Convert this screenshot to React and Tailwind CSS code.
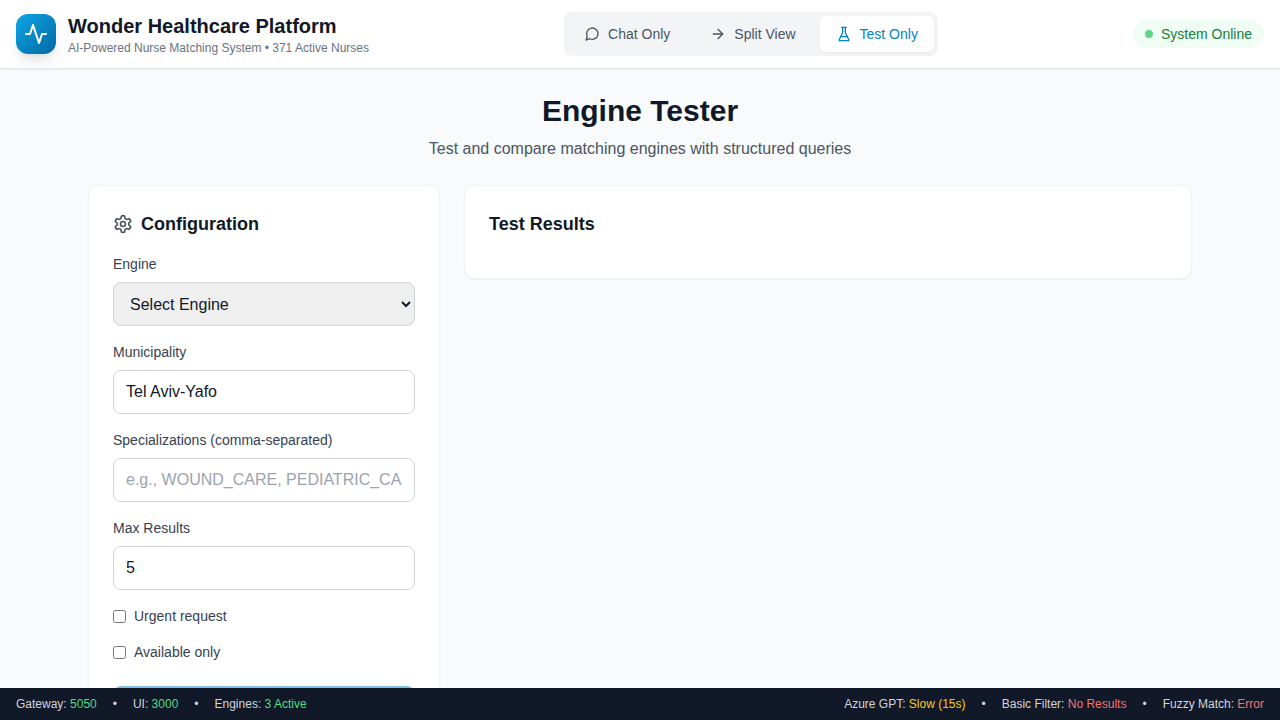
import React from "react";
import { ArrowRight } from "lucide-react";

function LineIcon({ className, children }) {
  return (
    <svg className={className} viewBox="0 0 24 24" fill="none" stroke="currentColor" strokeWidth="2" strokeLinecap="round" strokeLinejoin="round" aria-hidden="true">
      {children}
    </svg>
  );
}

function PulseIcon({ className }) {
  return (
    <LineIcon className={className}>
      <path d="M22 12h-4l-3 9L9 3l-3 9H2" />
    </LineIcon>
  );
}

function MessageIcon({ className }) {
  return (
    <LineIcon className={className}>
      <path d="m3 21 1.9-5.7a8.5 8.5 0 1 1 3.8 3.8z" />
    </LineIcon>
  );
}

function FlaskIcon({ className }) {
  return (
    <LineIcon className={className}>
      <path d="M10 2v7.527a2 2 0 0 1-.211.896L4.72 20.55a1 1 0 0 0 .9 1.45h12.76a1 1 0 0 0 .9-1.45l-5.069-10.127A2 2 0 0 1 14 9.527V2" />
      <path d="M8.5 2h7" />
      <path d="M7 16h10" />
    </LineIcon>
  );
}

function GearIcon({ className }) {
  return (
    <LineIcon className={className}>
      <path d="M12.22 2h-.44a2 2 0 0 0-2 2v.18a2 2 0 0 1-1 1.73l-.43.25a2 2 0 0 1-2 0l-.15-.08a2 2 0 0 0-2.73.73l-.22.38a2 2 0 0 0 .73 2.73l.15.1a2 2 0 0 1 1 1.72v.51a2 2 0 0 1-1 1.74l-.15.09a2 2 0 0 0-.73 2.73l.22.38a2 2 0 0 0 2.73.73l.15-.08a2 2 0 0 1 2 0l.43.25a2 2 0 0 1 1 1.73V20a2 2 0 0 0 2 2h.44a2 2 0 0 0 2-2v-.18a2 2 0 0 1 1-1.73l.43-.25a2 2 0 0 1 2 0l.15.08a2 2 0 0 0 2.73-.73l.22-.39a2 2 0 0 0-.73-2.73l-.15-.08a2 2 0 0 1-1-1.74v-.5a2 2 0 0 1 1-1.74l.15-.09a2 2 0 0 0 .73-2.73l-.22-.38a2 2 0 0 0-2.73-.73l-.15.08a2 2 0 0 1-2 0l-.43-.25a2 2 0 0 1-1-1.73V4a2 2 0 0 0-2-2z" />
      <circle cx="12" cy="12" r="3" />
    </LineIcon>
  );
}

const views = [
  { label: "Chat Only", Icon: MessageIcon },
  { label: "Split View", Icon: ArrowRight },
  { label: "Test Only", Icon: FlaskIcon, active: true },
];

function Header() {
  return (
    <header className="flex items-center justify-between border-b border-[#e5e7eb] bg-white px-4 py-3 shadow-xs">
      <div className="flex items-center gap-3">
        <div className="flex size-10 items-center justify-center rounded-xl bg-linear-to-br from-[#0ea5e9] to-[#0369a1] shadow-lg">
          <PulseIcon className="size-6 text-white" />
        </div>
        <div>
          <h1 className="text-xl font-bold text-[#111827]">Wonder Healthcare Platform</h1>
          <p className="text-xs text-[#6b7280]">AI-Powered Nurse Matching System • 371 Active Nurses</p>
        </div>
      </div>

      <nav className="flex items-center gap-2 rounded-lg bg-[#f3f4f6] p-1">
        {views.map(({ label, Icon, active }) => (
          <button
            key={label}
            type="button"
            aria-pressed={!!active}
            className={
              active
                ? "flex items-center gap-2 rounded-md bg-white px-4 py-2 text-sm font-medium text-[#0284c7] shadow-xs"
                : "flex items-center gap-2 rounded-md px-4 py-2 text-sm font-medium text-[#4b5563]"
            }
          >
            <Icon className="size-4" />
            {label}
          </button>
        ))}
      </nav>

      <div className="flex items-center gap-2 rounded-full bg-[#f0fdf4] px-3 py-1 text-sm font-medium text-[#15803d]">
        <span className="size-2 rounded-full bg-[#5fd58a]" />
        System Online
      </div>
    </header>
  );
}

const labelClass = "mb-2 block text-sm font-medium text-[#374151]";
const fieldClass = "block h-11 w-full rounded-lg border border-[#d1d5db] px-3 text-base text-[#111827] placeholder:text-[#9ca3af]";

function Configuration() {
  return (
    <section className="rounded-xl border border-[#f3f4f6] bg-white p-6 shadow-xs">
      <h3 className="mb-4 flex items-center gap-2 text-lg font-semibold text-[#111827]">
        <GearIcon className="size-5 text-[#4b5563]" />
        Configuration
      </h3>
      <form className="space-y-4">
        <div>
          <label htmlFor="engine" className={labelClass}>Engine</label>
          <select id="engine" className={`${fieldClass} bg-[#efefef]`}>
            <option>Select Engine</option>
          </select>
        </div>
        <div>
          <label htmlFor="municipality" className={labelClass}>Municipality</label>
          <input id="municipality" type="text" defaultValue="Tel Aviv-Yafo" className={fieldClass} />
        </div>
        <div>
          <label htmlFor="specializations" className={labelClass}>Specializations (comma-separated)</label>
          <input id="specializations" type="text" placeholder="e.g., WOUND_CARE, PEDIATRIC_CARE" className={fieldClass} />
        </div>
        <div>
          <label htmlFor="max-results" className={labelClass}>Max Results</label>
          <input id="max-results" type="number" defaultValue="5" className={fieldClass} />
        </div>
        <label className="flex items-center gap-2 text-sm text-[#374151]">
          <input type="checkbox" />
          Urgent request
        </label>
        <label className="flex items-center gap-2 text-sm text-[#374151]">
          <input type="checkbox" />
          Available only
        </label>
        <div className="pt-2">
          <button type="button" disabled aria-label="Run test" className="block h-12 w-full rounded-lg bg-[#0284c7] opacity-50" />
        </div>
      </form>
    </section>
  );
}

function StatusGroup({ items }) {
  return (
    <div className="flex items-center gap-4">
      {items.map(({ name, value, tone }, i) => (
        <React.Fragment key={name}>
          {i > 0 && <span>•</span>}
          <span>
            {name}: <span className={tone}>{value}</span>
          </span>
        </React.Fragment>
      ))}
    </div>
  );
}

const services = [
  { name: "Gateway", value: "5050", tone: "text-[#4ade80]" },
  { name: "UI", value: "3000", tone: "text-[#4ade80]" },
  { name: "Engines", value: "3 Active", tone: "text-[#4ade80]" },
];

const engines = [
  { name: "Azure GPT", value: "Slow (15s)", tone: "text-[#facc15]" },
  { name: "Basic Filter", value: "No Results", tone: "text-[#f87171]" },
  { name: "Fuzzy Match", value: "Error", tone: "text-[#f87171]" },
];

export default function App() {
  return (
    <div className="flex h-screen flex-col bg-[#f8fafc] font-['Liberation_Sans',Arial,sans-serif] text-[#111827]">
      <Header />
      <main className="min-h-0 flex-1 overflow-y-auto [scrollbar-width:none]">
        <div className="mx-auto max-w-6xl p-6">
          <div className="mb-6 text-center">
            <h2 className="mb-2 text-3xl font-bold">Engine Tester</h2>
            <p className="text-base text-[#4b5563]">Test and compare matching engines with structured queries</p>
          </div>
          <div className="grid grid-cols-3 items-start gap-6">
            <Configuration />
            <section className="col-span-2 rounded-xl border border-[#f3f4f6] bg-white p-6 shadow-xs">
              <h3 className="mb-4 text-lg font-semibold">Test Results</h3>
            </section>
          </div>
        </div>
      </main>
      <footer className="flex items-center justify-between bg-[#111827] px-4 py-2 text-xs text-[#d1d5db]">
        <StatusGroup items={services} />
        <StatusGroup items={engines} />
      </footer>
    </div>
  );
}
